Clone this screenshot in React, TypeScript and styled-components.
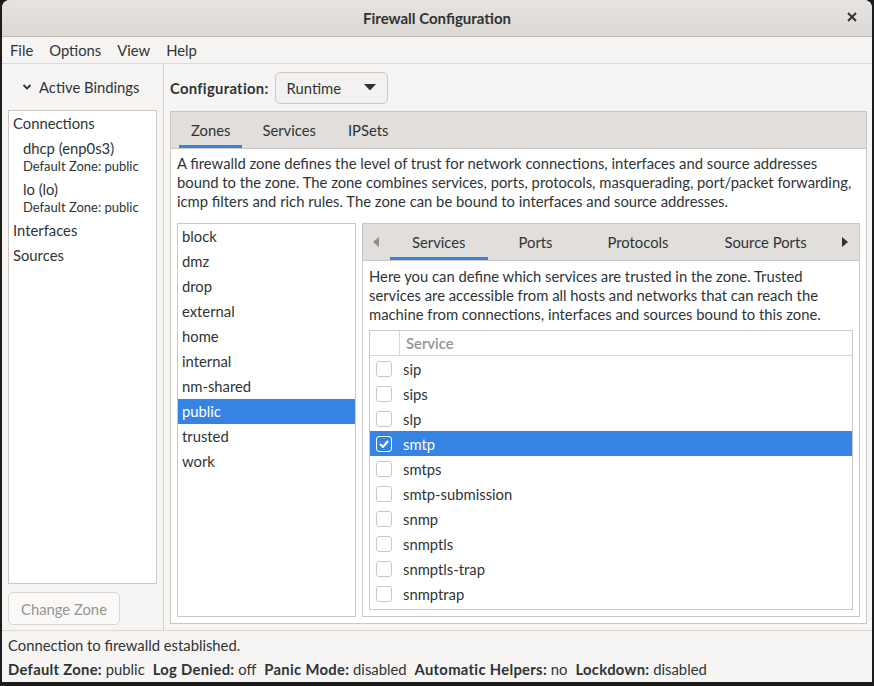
import React from 'react';
import styled, { createGlobalStyle } from 'styled-components';

const GlobalStyle = createGlobalStyle`
  html, body {
    margin: 0;
    padding: 0;
    background: #1c1c1c;
  }
  body {
    font-family: Lato, "Noto Sans", sans-serif;
    font-size: 14.8px;
    color: #2e3436;
  }
`;

const Window = styled.div`
  width: 870px;
  height: 682px;
  margin-left: 2px;
  background: #f6f5f4;
  border-radius: 8px 8px 0 0;
  display: flex;
  flex-direction: column;
  overflow: hidden;
`;

const TitleBar = styled.header`
  height: 36px;
  flex: none;
  background: linear-gradient(#e6e3e0, #dcd8d5);
  border-bottom: 1px solid #bfb8b1;
  display: flex;
  align-items: center;
  justify-content: center;
  position: relative;
  font-weight: 700;
  font-size: 15px;
`;

const CloseButton = styled.span`
  position: absolute;
  right: 12px;
  top: 9px;
  width: 16px;
  height: 16px;
  display: flex;
  align-items: center;
  justify-content: center;
`;

const MenuBar = styled.nav`
  height: 26px;
  flex: none;
  display: flex;
  align-items: center;
  gap: 16px;
  padding-left: 8px;
  border-bottom: 1px solid #dcd8d4;
`;

const Main = styled.div`
  flex: 1;
  display: flex;
  min-height: 0;
  border-bottom: 1px solid #dcd8d4;
`;

const LeftPane = styled.aside`
  width: 149px;
  flex: none;
  padding: 0 6px 5px 6px;
  border-right: 1px solid #d6d1cd;
  display: flex;
  flex-direction: column;
`;

const Expander = styled.div`
  height: 46px;
  display: flex;
  align-items: center;
  gap: 7px;
  padding-left: 14px;
`;

const Box = styled.div`
  background: #ffffff;
  border: 1px solid #cdc7c2;
`;

const BindingList = styled(Box)`
  flex: 1;
`;

const BindingHeading = styled.div`
  height: 25px;
  line-height: 25px;
  padding-left: 4px;
`;

const BindingGroup = styled.div`
  height: 41px;
  padding-left: 14px;
`;

const BindingName = styled.div`
  line-height: 24px;
`;

const BindingSub = styled.div`
  font-size: 13px;
  line-height: 13px;
`;

const Button = styled.button<{ $disabled?: boolean }>`
  font: inherit;
  color: ${(p) => (p.$disabled ? '#929595' : '#2e3436')};
  background: ${(p) => (p.$disabled ? '#faf9f8' : '#f3f2f1')};
  border: 1px solid ${(p) => (p.$disabled ? '#d8d4d0' : '#cdc7c2')};
  border-radius: 5px;
  height: 33px;
  padding: 0 12px;
  text-align: left;
  display: flex;
  align-items: center;
`;

const ChangeZone = styled(Button)`
  margin-top: 8px;
  width: 112px;
`;

const RightPane = styled.section`
  flex: 1;
  display: flex;
  flex-direction: column;
  padding: 0 5px 6px 6px;
  min-width: 0;
`;

const ConfigRow = styled.div`
  height: 47px;
  display: flex;
  align-items: center;
  gap: 6px;
`;

const Bold = styled.span`
  font-weight: 700;
  letter-spacing: 0.3px;
`;

const Combo = styled(Button)`
  width: 113px;
  height: 32px;
  justify-content: space-between;
  padding: 0 11px;
`;

const Notebook = styled.div`
  border: 1px solid #cdc7c2;
  display: flex;
  flex-direction: column;
  flex: 1;
  min-height: 0;
  background: #ffffff;
`;

const TabStrip = styled.div<{ $pad: number }>`
  height: 36px;
  flex: none;
  background: #e1dedb;
  border-bottom: 1px solid #cdc7c2;
  display: flex;
  align-items: stretch;
  gap: 8px;
  padding-left: ${(p) => p.$pad}px;
`;

const Tab = styled.div<{ $active?: boolean; $pad: number }>`
  padding: 0 ${(p) => p.$pad}px 1px;
  display: flex;
  align-items: center;
  color: #2e3436;
  white-space: nowrap;
  box-shadow: ${(p) => (p.$active ? 'inset 0 -3px 0 #3584e4' : 'none')};
`;

const Arrow = styled.div`
  width: 12px;
  display: flex;
  align-items: center;
  justify-content: center;
`;

const Page = styled.div`
  flex: 1;
  display: flex;
  flex-direction: column;
  padding: 5px 6px 6px 6px;
  min-height: 0;
`;

const Description = styled.p<{ $gap: number }>`
  margin: 0 0 ${(p) => p.$gap}px 0;
  line-height: 19px;
  white-space: nowrap;
`;

const ZoneArea = styled.div`
  flex: 1;
  display: flex;
  gap: 6px;
  min-height: 0;
`;

const ZoneList = styled(Box)`
  width: 177px;
  flex: none;
`;

const Row = styled.div<{ $selected?: boolean }>`
  height: 25px;
  display: flex;
  align-items: center;
  gap: 10px;
  padding: 0 0 1px 4px;
  box-sizing: border-box;
  background: ${(p) => (p.$selected ? '#3584e4' : 'transparent')};
  color: ${(p) => (p.$selected ? '#ffffff' : '#2e3436')};
`;

const InnerPage = styled(Page)`
  padding: 6px 6px 6px 6px;
`;

const Tree = styled(Box)`
  flex: 1;
  min-height: 0;
`;

const TreeHeader = styled.div`
  height: 24px;
  display: flex;
  border-bottom: 1px solid #dcd8d4;
  color: #929595;
  font-weight: 600;
`;

const HeaderCell = styled.div<{ $w?: number }>`
  width: ${(p) => (p.$w ? `${p.$w}px` : 'auto')};
  flex: ${(p) => (p.$w ? 'none' : '1')};
  border-right: ${(p) => (p.$w ? '1px solid #dcd8d4' : 'none')};
  display: flex;
  align-items: center;
  padding-left: ${(p) => (p.$w ? 0 : 6)}px;
`;

const TreeRow = styled(Row)`
  padding: 0 0 0 6px;
  gap: 11px;
`;

const Check = styled.span<{ $on?: boolean }>`
  width: 14px;
  height: 14px;
  border-radius: 3px;
  border: 1px solid ${(p) => (p.$on ? '#ffffff' : '#cdc7c2')};
  background: ${(p) => (p.$on ? '#3584e4' : '#ffffff')};
  display: flex;
  align-items: center;
  justify-content: center;
  flex: none;
`;

const StatusBar = styled.footer`
  flex: none;
  padding: 2px 6px 1px 6px;
  display: flex;
  flex-direction: column;
`;

const StatusLine = styled.div`
  height: 24px;
  display: flex;
  align-items: center;
  gap: 8px;
  white-space: nowrap;
`;

const bindings = [
  { name: 'dhcp (enp0s3)', zone: 'public' },
  { name: 'lo (lo)', zone: 'public' },
];

const zones = ['block', 'dmz', 'drop', 'external', 'home', 'internal', 'nm-shared', 'public', 'trusted', 'work'];

const services = [
  'sip',
  'sips',
  'slp',
  'smtp',
  'smtps',
  'smtp-submission',
  'snmp',
  'snmptls',
  'snmptls-trap',
  'snmptrap',
];

const status = [
  ['Default Zone:', 'public'],
  ['Log Denied:', 'off'],
  ['Panic Mode:', 'disabled'],
  ['Automatic Helpers:', 'no'],
  ['Lockdown:', 'disabled'],
];

export default function App() {
  return (
    <>
      <GlobalStyle />
      <Window>
        <TitleBar>
          Firewall Configuration
          <CloseButton>
            <svg width="10" height="10" viewBox="0 0 10 10">
              <path d="M1 1 L9 9 M9 1 L1 9" stroke="#2e3436" strokeWidth="2" />
            </svg>
          </CloseButton>
        </TitleBar>
        <MenuBar>
          <span>File</span>
          <span>Options</span>
          <span>View</span>
          <span>Help</span>
        </MenuBar>
        <Main>
          <LeftPane>
            <Expander>
              <svg width="10" height="8" viewBox="0 0 10 8">
                <path d="M1.5 2 L5 5.5 L8.5 2" stroke="#2e3436" strokeWidth="1.8" fill="none" />
              </svg>
              Active Bindings
            </Expander>
            <BindingList>
              <BindingHeading>Connections</BindingHeading>
              {bindings.map((b) => (
                <BindingGroup key={b.name}>
                  <BindingName>{b.name}</BindingName>
                  <BindingSub>Default Zone: {b.zone}</BindingSub>
                </BindingGroup>
              ))}
              <BindingHeading>Interfaces</BindingHeading>
              <BindingHeading>Sources</BindingHeading>
            </BindingList>
            <ChangeZone $disabled>Change Zone</ChangeZone>
          </LeftPane>
          <RightPane>
            <ConfigRow>
              <Bold>Configuration:</Bold>
              <Combo>
                Runtime
                <svg width="12" height="7" viewBox="0 0 12 7">
                  <path d="M0 0 L12 0 L6 6.5 Z" fill="#2e3436" />
                </svg>
              </Combo>
            </ConfigRow>
            <Notebook>
              <TabStrip $pad={8}>
                <Tab $active $pad={12}>Zones</Tab>
                <Tab $pad={12}>Services</Tab>
                <Tab $pad={12}>IPSets</Tab>
              </TabStrip>
              <Page>
                <Description $gap={12}>
                  A firewalld zone defines the level of trust for network connections, interfaces and source addresses
                  <br />
                  bound to the zone. The zone combines services, ports, protocols, masquerading, port/packet forwarding,
                  <br />
                  icmp filters and rich rules. The zone can be bound to interfaces and source addresses.
                </Description>
                <ZoneArea>
                  <ZoneList>
                    {zones.map((z) => (
                      <Row key={z} $selected={z === 'public'}>
                        {z}
                      </Row>
                    ))}
                  </ZoneList>
                  <Notebook>
                    <TabStrip $pad={7}>
                      <Arrow>
                        <svg width="6" height="10" viewBox="0 0 6 10">
                          <path d="M6 0 L0 5 L6 10 Z" fill="#8b8e8f" />
                        </svg>
                      </Arrow>
                      <Tab $active $pad={22}>Services</Tab>
                      <Tab $pad={23}>Ports</Tab>
                      <Tab $pad={24}>Protocols</Tab>
                      <Tab $pad={24}>Source Ports</Tab>
                      <Arrow>
                        <svg width="6" height="10" viewBox="0 0 6 10">
                          <path d="M0 0 L6 5 L0 10 Z" fill="#2e3436" />
                        </svg>
                      </Arrow>
                    </TabStrip>
                    <InnerPage>
                      <Description $gap={6}>
                        Here you can define which services are trusted in the zone. Trusted
                        <br />
                        services are accessible from all hosts and networks that can reach the
                        <br />
                        machine from connections, interfaces and sources bound to this zone.
                      </Description>
                      <Tree>
                        <TreeHeader>
                          <HeaderCell $w={29} />
                          <HeaderCell>Service</HeaderCell>
                        </TreeHeader>
                        {services.map((s) => (
                          <TreeRow key={s} $selected={s === 'smtp'}>
                            <Check $on={s === 'smtp'}>
                              {s === 'smtp' && (
                                <svg width="10" height="8" viewBox="0 0 10 8">
                                  <path d="M1 4 L4 7 L9 1" stroke="#ffffff" strokeWidth="2" fill="none" />
                                </svg>
                              )}
                            </Check>
                            {s}
                          </TreeRow>
                        ))}
                      </Tree>
                    </InnerPage>
                  </Notebook>
                </ZoneArea>
              </Page>
            </Notebook>
          </RightPane>
        </Main>
        <StatusBar>
          <StatusLine>Connection to firewalld established.</StatusLine>
          <StatusLine>
            {status.map(([k, v]) => (
              <span key={k}>
                <Bold>{k}</Bold> {v}
              </span>
            ))}
          </StatusLine>
        </StatusBar>
      </Window>
    </>
  );
}
